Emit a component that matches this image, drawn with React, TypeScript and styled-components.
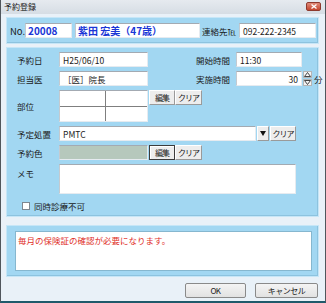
import React from 'react'
import styled, { createGlobalStyle } from 'styled-components'

const GlobalStyle = createGlobalStyle`
  html, body {
    margin: 0;
    padding: 0;
    background: #ffffff;
  }
  body {
    font-family: 'Noto Sans CJK JP', 'Noto Sans', sans-serif;
    font-size: 8.5px;
    color: #1a1a1a;
  }
  * {
    box-sizing: border-box;
  }
`

const Window = styled.div`
  width: 326px;
  height: 303px;
  display: flex;
  flex-direction: column;
  background: #e9f1f8;
  border-left: 1px solid #50565c;
  border-right: 1px solid #50565c;
  border-bottom: 2px solid #1f5a6b;
  overflow: hidden;
`

const TitleBar = styled.div`
  height: 14px;
  flex: none;
  display: flex;
  align-items: center;
  justify-content: space-between;
  padding: 0 4px 0 3px;
  background: linear-gradient(#e6eaef, #d6dde4);
  font-size: 8px;
  line-height: 1;
`

const CloseButton = styled.div`
  width: 15px;
  height: 9px;
  margin-top: -2px;
  border-radius: 2px;
  border: 1px solid #8e3a2e;
  background: linear-gradient(#e08a78, #c4462f);
  display: flex;
  align-items: center;
  justify-content: center;
`

const Body = styled.div`
  flex: 1;
  display: flex;
  flex-direction: column;
  padding: 3px 6px 0 5px;
`

const Panel = styled.div<{ $h: number; $mt: number }>`
  height: ${(p) => p.$h}px;
  margin-top: ${(p) => p.$mt}px;
  flex: none;
  background: #a2d7f2;
  border: 1px solid #c6e6f7;
  box-shadow: inset -1px -1px 0 #8dc3df;
`

const HeaderPanel = styled(Panel)`
  display: flex;
  align-items: center;
  padding-left: 3px;
`

const Label = styled.div<{ $w: number }>`
  width: ${(p) => p.$w}px;
  flex: none;
  white-space: nowrap;
`

const Field = styled.div<{ $w: number; $h?: number; $bg?: string; $right?: boolean }>`
  width: ${(p) => p.$w}px;
  height: ${(p) => p.$h ?? 15}px;
  flex: none;
  background: ${(p) => p.$bg ?? '#ffffff'};
  border-top: 1px solid #a3aab2;
  border-left: 1px solid #c4cad0;
  border-right: 1px solid #e6ebf0;
  border-bottom: 1px solid #e6ebf0;
  padding: 0 3px;
  display: flex;
  align-items: center;
  justify-content: ${(p) => (p.$right ? 'flex-end' : 'flex-start')};
  white-space: nowrap;
`

const BlueField = styled(Field)`
  color: #1a36d6;
  font-weight: bold;
  font-size: 10px;
  padding-left: 2px;
`

const FormPanel = styled(Panel)`
  display: flex;
  flex-direction: column;
  gap: 4px;
  padding: 4px 0 0 10px;
`

const Row = styled.div<{ $align?: string }>`
  display: flex;
  align-items: ${(p) => p.$align ?? 'center'};
`

const SmallButton = styled.div<{ $w: number; $focus?: boolean; $ml?: number }>`
  width: ${(p) => p.$w}px;
  height: 15px;
  flex: none;
  margin-left: ${(p) => p.$ml ?? 0}px;
  display: flex;
  align-items: center;
  justify-content: center;
  background: #ededed;
  border: 1px solid;
  border-color: ${(p) => (p.$focus ? '#3c3c3c' : '#ffffff #9a9a9a #9a9a9a #ffffff')};
  box-shadow: ${(p) => (p.$focus ? 'inset 1px 1px 0 #ffffff' : 'none')};
  font-size: 8px;
  letter-spacing: -1px;
  white-space: nowrap;
  overflow: hidden;
`

const PartGrid = styled.div`
  width: 89px;
  height: 32px;
  flex: none;
  display: grid;
  grid-template-columns: 45px 1fr;
  grid-template-rows: 1fr 1fr;
  background: #7f7f7f;
  gap: 1px;
  border-top: 1px solid #a3aab2;
  border-left: 1px solid #c4cad0;
  border-right: 1px solid #e6ebf0;
  border-bottom: 1px solid #e6ebf0;
`

const Cell = styled.div`
  background: #ffffff;
`

const Spinner = styled.div`
  width: 9px;
  height: 15px;
  flex: none;
  display: flex;
  flex-direction: column;
  justify-content: space-between;
  margin-left: 1px;
`

const SpinPart = styled.div`
  height: 7px;
  background: #f4f4f4;
  border: 1px solid #b5b5b5;
  display: flex;
  align-items: center;
  justify-content: center;
`

const CheckRow = styled.div`
  display: flex;
  align-items: center;
  gap: 4px;
  margin-top: 2px;
  padding-left: 5px;
`

const CheckBox = styled.div`
  width: 8px;
  height: 8px;
  background: #ffffff;
  border: 1px solid #7d8790;
`

const MessagePanel = styled(Panel)`
  padding: 5px 6px 0 8px;
`

const MessageBox = styled.div`
  height: 40px;
  background: #ffffff;
  border: 1px solid #86b7cf;
  padding: 2px 2px;
  color: #e0302a;
  white-space: nowrap;
`

const Footer = styled.div`
  display: flex;
  justify-content: flex-end;
  gap: 9px;
  margin-top: 6px;
  padding-right: 1px;
`

const DialogButton = styled.div<{ $w: number }>`
  width: ${(p) => p.$w}px;
  height: 15px;
  display: flex;
  align-items: center;
  justify-content: center;
  background: linear-gradient(#f4f4f4, #e2e2e2);
  border: 1px solid #8a8a8a;
  border-radius: 2px;
  font-size: 8px;
  letter-spacing: -0.5px;
`

const UpArrow = () => (
  <svg width='7' height='5' viewBox='0 0 7 5'>
    <path d='M3.5 0.5 L6.5 4.5 L0.5 4.5 Z' fill='none' stroke='#333' strokeWidth='0.9' />
  </svg>
)

const DownArrow = () => (
  <svg width='7' height='5' viewBox='0 0 7 5'>
    <path d='M0.5 0.5 L6.5 0.5 L3.5 4.5 Z' fill='none' stroke='#333' strokeWidth='0.9' />
  </svg>
)

function App() {
  return (
    <>
      <GlobalStyle />
      <Window>
        <TitleBar>
          <span>予約登録</span>
          <CloseButton>
            <svg width='6' height='5' viewBox='0 0 6 5'>
              <path d='M0.5 0.5 L5.5 4.5 M5.5 0.5 L0.5 4.5' stroke='#ffffff' strokeWidth='1.3' />
            </svg>
          </CloseButton>
        </TitleBar>
        <Body>
          <HeaderPanel $h={27} $mt={0}>
            <Label $w={15} style={{ fontSize: 9.5 }}>
              No.
            </Label>
            <BlueField $w={47}>20008</BlueField>
            <BlueField $w={125} style={{ marginLeft: 3 }}>
              紫田 宏美（47歳）
            </BlueField>
            <Label $w={37} style={{ marginLeft: 2 }}>
              連絡先℡
            </Label>
            <Field $w={77}>092-222-2345</Field>
          </HeaderPanel>

          <FormPanel $h={170} $mt={3}>
            <Row>
              <Label $w={42}>予約日</Label>
              <Field $w={89}>H25/06/10</Field>
              <Label $w={40} style={{ marginLeft: 48 }}>
                開始時間
              </Label>
              <Field $w={66}>11:30</Field>
            </Row>
            <Row>
              <Label $w={42}>担当医</Label>
              <Field $w={89}>［医］院長</Field>
              <Label $w={40} style={{ marginLeft: 48 }}>
                実施時間
              </Label>
              <Field $w={66} $right>
                30
              </Field>
              <Spinner>
                <SpinPart>
                  <UpArrow />
                </SpinPart>
                <SpinPart>
                  <DownArrow />
                </SpinPart>
              </Spinner>
              <Label $w={10} style={{ marginLeft: 2 }}>
                分
              </Label>
            </Row>
            <Row $align='flex-start'>
              <Label $w={42} style={{ lineHeight: '32px' }}>
                部位
              </Label>
              <PartGrid>
                <Cell />
                <Cell />
                <Cell />
                <Cell />
              </PartGrid>
              <SmallButton $w={26} $ml={1}>
                編集
              </SmallButton>
              <SmallButton $w={27}>クリア</SmallButton>
            </Row>
            <Row>
              <Label $w={42}>予定処置</Label>
              <Field $w={197}>PMTC</Field>
              <SmallButton $w={12} $ml={1}>
                <svg width='6' height='5' viewBox='0 0 6 5'>
                  <path d='M0 0 L6 0 L3 5 Z' fill='#111' />
                </svg>
              </SmallButton>
              <SmallButton $w={26} $ml={1}>
                クリア
              </SmallButton>
            </Row>
            <Row>
              <Label $w={42}>予約色</Label>
              <Field $w={89} $bg='#b6c8bc' />
              <SmallButton $w={26} $ml={1} $focus>
                編集
              </SmallButton>
              <SmallButton $w={27}>クリア</SmallButton>
            </Row>
            <Row $align='flex-start'>
              <Label $w={42} style={{ paddingTop: 3 }}>
                メモ
              </Label>
              <Field $w={237} $h={30} />
            </Row>
            <CheckRow>
              <CheckBox />
              <span>同時診療不可</span>
            </CheckRow>
          </FormPanel>

          <MessagePanel $h={52} $mt={8}>
            <MessageBox>毎月の保険証の確認が必要になります。</MessageBox>
          </MessagePanel>

          <Footer>
            <DialogButton $w={61}>OK</DialogButton>
            <DialogButton $w={63}>キャンセル</DialogButton>
          </Footer>
        </Body>
      </Window>
    </>
  )
}

export default App
